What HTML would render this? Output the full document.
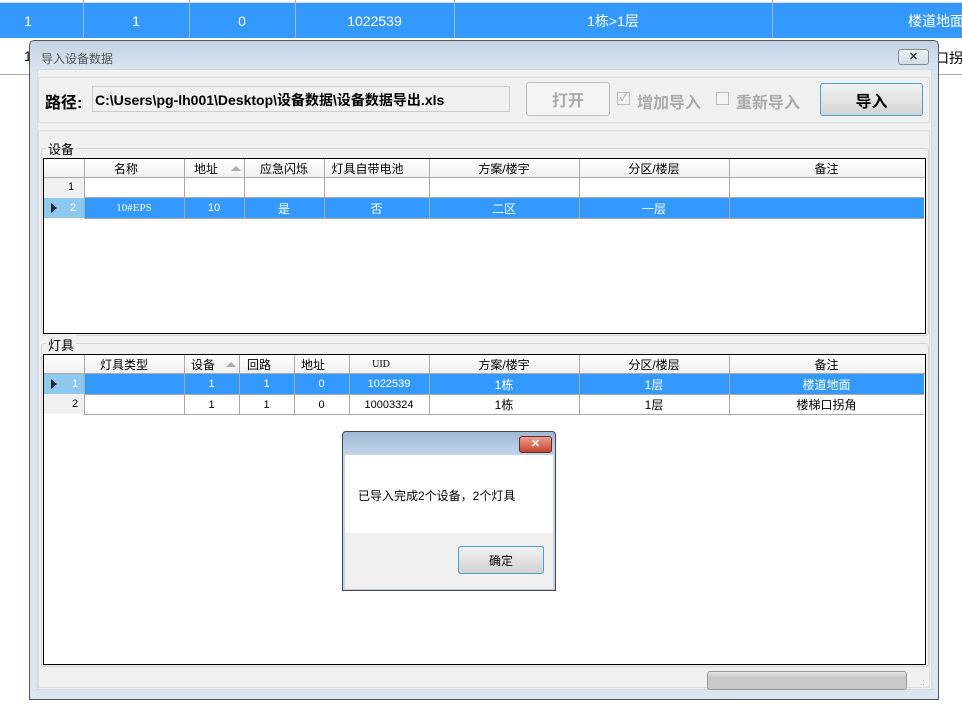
<!DOCTYPE html>
<html><head><meta charset="utf-8"><style>
*{margin:0;padding:0;box-sizing:border-box}
body{width:962px;height:718px;position:relative;background:#fff;overflow:hidden;font-family:"Liberation Sans","Noto Sans CJK SC",sans-serif;font-size:12px;color:#000}
.a{position:absolute}
.c{position:absolute;display:flex;align-items:center;justify-content:center;white-space:nowrap}
.bt{font-size:14px}
</style></head><body>
<!-- background table -->
<div class="a" style="left:0;top:3px;width:962px;height:35px;background:#3399ff"></div>
<div class="a" style="left:0;top:2px;width:962px;height:1px;background:#ddd"></div>
<div class="a" style="left:83px;top:0;width:1px;height:38px;background:#9bb"></div>
<div class="a" style="left:189px;top:0;width:1px;height:38px;background:#9bb"></div>
<div class="a" style="left:295px;top:0;width:1px;height:38px;background:#9bb"></div>
<div class="a" style="left:454px;top:0;width:1px;height:38px;background:#9bb"></div>
<div class="a" style="left:772px;top:0;width:1px;height:38px;background:#9bb"></div>
<div class="c bt" style="left:0;top:3px;width:56px;height:35px;color:#fff">1</div>
<div class="c bt" style="left:83px;top:3px;width:106px;height:35px;color:#fff">1</div>
<div class="c bt" style="left:189px;top:3px;width:106px;height:35px;color:#fff">0</div>
<div class="c bt" style="left:295px;top:3px;width:159px;height:35px;color:#fff">1022539</div>
<div class="c bt" style="left:454px;top:3px;width:318px;height:35px;color:#fff">1栋&gt;1层</div>
<div class="a bt" style="left:908px;top:11px;color:#fff;white-space:nowrap">楼道地面</div>
<div class="a bt" style="left:24px;top:48px">1</div>
<div class="a bt" style="left:935px;top:48px;white-space:nowrap">口拐</div>
<div class="a" style="left:0;top:74px;width:962px;height:1px;background:#aaa"></div>

<!-- dialog -->
<div class="a" style="left:29px;top:40px;width:910px;height:660px;border:1px solid #555;border-radius:5px 5px 0 0;background:linear-gradient(#c2d2e4,#dae5f1 30px,#dae5f1)"></div>
<div class="a" style="left:41px;top:50px;color:#555;font-size:12px">导入设备数据</div>
<div class="a" style="left:898px;top:49px;width:31px;height:16px;border:1px solid #888;border-radius:3px;background:linear-gradient(#eef2f7,#d3dbe6);text-align:center;font-size:11px;line-height:14px;font-weight:bold;color:#444">✕</div>
<div class="a" style="left:37px;top:69px;width:895px;height:621px;background:#f0f0f0;border:1px solid #cdd"></div>
<div class="a" style="left:38px;top:77px;width:892px;height:46px;border:1px solid #dcdcdc;border-radius:2px"></div>
<div class="a" style="left:45px;top:89px;font-size:16px;font-weight:bold">路径:</div>
<div class="a" style="left:92px;top:86px;width:418px;height:26px;border:1px solid #ccc;background:#f0f0f0;font-size:14px;font-weight:bold;padding:3px 0 0 2px;white-space:nowrap">C:\Users\pg-lh001\Desktop\设备数据\设备数据导出.xls</div>
<div class="c" style="left:526px;top:82px;width:84px;height:34px;border:1px solid #bbb;border-radius:3px;background:#f4f4f4;color:#aaa;font-size:16px;font-weight:bold">打开</div>
<div class="a" style="left:617px;top:92px;width:13px;height:13px;border:1px solid #bbb;color:#aaa;font-size:11px;line-height:11px;text-align:center">✓</div>
<div class="a" style="left:637px;top:89px;color:#aaa;font-size:16px;font-weight:bold">增加导入</div>
<div class="a" style="left:716px;top:92px;width:13px;height:13px;border:1px solid #bbb;background:#f4f4f4"></div>
<div class="a" style="left:736px;top:89px;color:#aaa;font-size:16px;font-weight:bold">重新导入</div>
<div class="c" style="left:820px;top:83px;width:103px;height:33px;border:1px solid #3ca4d8;border-radius:3px;background:linear-gradient(#f2f2f2,#e4e4e4 50%,#d2d2d2);font-size:16px;font-weight:bold">导入</div>

<div class="a" style="left:38px;top:130px;width:892px;height:558px;border:1px solid #dcdcdc"></div>
<!-- 设备 group -->
<div class="a" style="left:41px;top:148px;width:888px;height:188px;border:1px solid #d5d5d5;border-radius:3px"></div>
<div class="a" style="left:46px;top:139px;font-size:13px;background:#f0f0f0;padding:0 2px">设备</div>
<div class="a" style="left:43px;top:158px;width:883px;height:176px;border:1px solid #000;background:#fff"></div>
<div class="a" style="left:44px;top:159px;width:881px;height:19px;background:linear-gradient(#fff,#f0f0f0);border-bottom:1px solid #aaa"></div>
<div class="a" style="left:44px;top:178px;width:40px;height:40px;background:#f0f0f0"></div>
<div class="a" style="left:84px;top:198px;width:840px;height:20px;background:#3399ff"></div>
<div class="a" style="left:44px;top:198px;width:40px;height:20px;background:#8fc8ef"></div>
<div class="a" style="left:84px;top:197px;width:840px;height:1px;background:#aaa"></div>
<div class="a" style="left:84px;top:218px;width:840px;height:1px;background:#aaa"></div>
<div class="a" style="left:84px;top:159px;width:1px;height:59px;background:#aaa"></div>
<div class="a" style="left:184px;top:159px;width:1px;height:59px;background:#aaa"></div>
<div class="a" style="left:244px;top:159px;width:1px;height:59px;background:#aaa"></div>
<div class="a" style="left:324px;top:159px;width:1px;height:59px;background:#aaa"></div>
<div class="a" style="left:429px;top:159px;width:1px;height:59px;background:#aaa"></div>
<div class="a" style="left:579px;top:159px;width:1px;height:59px;background:#aaa"></div>
<div class="a" style="left:729px;top:159px;width:1px;height:59px;background:#aaa"></div>
<div class="c" style="left:84px;top:159px;width:84px;height:19px">名称</div>
<div class="c" style="left:184px;top:159px;width:44px;height:19px">地址</div>
<div class="a" style="left:231px;top:166px;border:5px solid transparent;border-bottom:5px solid #aaa;border-top:0"></div>
<div class="c" style="left:244px;top:159px;width:80px;height:19px">应急闪烁</div>
<div class="c" style="left:324px;top:159px;width:87px;height:19px">灯具自带电池</div>
<div class="c" style="left:429px;top:159px;width:150px;height:19px">方案/楼宇</div>
<div class="c" style="left:579px;top:159px;width:150px;height:19px">分区/楼层</div>
<div class="c" style="left:729px;top:159px;width:195px;height:19px">备注</div>
<div class="a" style="left:68px;top:181px;font-size:11px">1</div>
<div class="a" style="left:51px;top:203px;border-left:6px solid #222;border-top:5px solid transparent;border-bottom:5px solid transparent"></div>
<div class="a" style="left:70px;top:202px;font-size:11px;color:#fff">2</div>
<div class="c" style="left:84px;top:198px;width:100px;height:20px;color:#fff;font-family:'Liberation Serif',serif;font-size:11px">10#EPS</div>
<div class="c" style="left:184px;top:198px;width:60px;height:20px;color:#fff;font-size:11px">10</div>
<div class="c" style="left:244px;top:198px;width:80px;height:20px;color:#fff">是</div>
<div class="c" style="left:324px;top:198px;width:105px;height:20px;color:#fff">否</div>
<div class="c" style="left:429px;top:198px;width:150px;height:20px;color:#fff">二区</div>
<div class="c" style="left:579px;top:198px;width:150px;height:20px;color:#fff">一层</div>

<!-- 灯具 group -->
<div class="a" style="left:41px;top:343px;width:888px;height:324px;border:1px solid #d5d5d5;border-radius:3px"></div>
<div class="a" style="left:46px;top:335px;font-size:13px;background:#f0f0f0;padding:0 2px">灯具</div>
<div class="a" style="left:43px;top:354px;width:883px;height:311px;border:1px solid #000;background:#fff"></div>
<div class="a" style="left:44px;top:355px;width:881px;height:19px;background:linear-gradient(#fff,#f0f0f0);border-bottom:1px solid #aaa"></div>
<div class="a" style="left:44px;top:374px;width:40px;height:40px;background:#f0f0f0"></div>
<div class="a" style="left:84px;top:374px;width:840px;height:20px;background:#3399ff"></div>
<div class="a" style="left:44px;top:374px;width:40px;height:20px;background:#8fc8ef"></div>
<div class="a" style="left:84px;top:394px;width:840px;height:1px;background:#aaa"></div>
<div class="a" style="left:84px;top:414px;width:840px;height:1px;background:#aaa"></div>
<div class="a" style="left:84px;top:355px;width:1px;height:59px;background:#aaa"></div>
<div class="a" style="left:184px;top:355px;width:1px;height:59px;background:#aaa"></div>
<div class="a" style="left:239px;top:355px;width:1px;height:59px;background:#aaa"></div>
<div class="a" style="left:294px;top:355px;width:1px;height:59px;background:#aaa"></div>
<div class="a" style="left:349px;top:355px;width:1px;height:59px;background:#aaa"></div>
<div class="a" style="left:429px;top:355px;width:1px;height:59px;background:#aaa"></div>
<div class="a" style="left:579px;top:355px;width:1px;height:59px;background:#aaa"></div>
<div class="a" style="left:729px;top:355px;width:1px;height:59px;background:#aaa"></div>
<div class="c" style="left:84px;top:355px;width:80px;height:19px">灯具类型</div>
<div class="c" style="left:184px;top:355px;width:38px;height:19px">设备</div>
<div class="a" style="left:226px;top:362px;border:5px solid transparent;border-bottom:5px solid #aaa;border-top:0"></div>
<div class="c" style="left:239px;top:355px;width:40px;height:19px">回路</div>
<div class="c" style="left:294px;top:355px;width:38px;height:19px">地址</div>
<div class="c" style="left:349px;top:355px;width:64px;height:19px;font-size:10px;font-family:'Liberation Serif',serif">UID</div>
<div class="c" style="left:429px;top:355px;width:150px;height:19px">方案/楼宇</div>
<div class="c" style="left:579px;top:355px;width:150px;height:19px">分区/楼层</div>
<div class="c" style="left:729px;top:355px;width:195px;height:19px">备注</div>
<div class="a" style="left:51px;top:379px;border-left:6px solid #222;border-top:5px solid transparent;border-bottom:5px solid transparent"></div>
<div class="a" style="left:72px;top:378px;font-size:11px;color:#fff">1</div>
<div class="a" style="left:72px;top:398px;font-size:11px">2</div>
<div class="c" style="left:184px;top:374px;width:55px;height:20px;color:#fff;font-size:11px">1</div>
<div class="c" style="left:239px;top:374px;width:55px;height:20px;color:#fff;font-size:11px">1</div>
<div class="c" style="left:294px;top:374px;width:55px;height:20px;color:#fff;font-size:11px">0</div>
<div class="c" style="left:349px;top:374px;width:80px;height:20px;color:#fff;font-size:11px">1022539</div>
<div class="c" style="left:429px;top:374px;width:150px;height:20px;color:#fff">1栋</div>
<div class="c" style="left:579px;top:374px;width:150px;height:20px;color:#fff">1层</div>
<div class="c" style="left:729px;top:374px;width:195px;height:20px;color:#fff">楼道地面</div>
<div class="c" style="left:184px;top:395px;width:55px;height:19px;font-size:11px">1</div>
<div class="c" style="left:239px;top:395px;width:55px;height:19px;font-size:11px">1</div>
<div class="c" style="left:294px;top:395px;width:55px;height:19px;font-size:11px">0</div>
<div class="c" style="left:349px;top:395px;width:80px;height:19px;font-size:11px">10003324</div>
<div class="c" style="left:429px;top:395px;width:150px;height:19px">1栋</div>
<div class="c" style="left:579px;top:395px;width:150px;height:19px">1层</div>
<div class="c" style="left:729px;top:395px;width:195px;height:19px">楼梯口拐角</div>

<!-- status bar -->
<div class="a" style="left:707px;top:671px;width:200px;height:19px;border:1px solid #999;border-radius:3px;background:linear-gradient(#e6e6e6,#c8c8c8 30%,#c8c8c8)"></div>
<div class="a" style="left:920px;top:678px;font-size:8px;color:#999">.:</div>

<!-- message box -->
<div class="a" style="left:342px;top:431px;width:214px;height:160px;border:1px solid #444;border-radius:4px 4px 0 0;background:linear-gradient(#9fb8d4,#c0d4ea 22px)"></div>
<div class="a" style="left:519px;top:436px;width:33px;height:17px;border:1px solid #6a2a2a;border-radius:3px;background:linear-gradient(#e8a08e,#c8442e);color:#fff;font-weight:bold;font-size:11px;text-align:center;line-height:15px">✕</div>
<div class="a" style="left:345px;top:455px;width:208px;height:78px;background:#fff"></div>
<div class="a" style="left:345px;top:533px;width:208px;height:56px;background:#f0f0f0"></div>
<div class="a" style="left:358px;top:487px;font-size:12px;white-space:nowrap">已导入完成2个设备，2个灯具</div>
<div class="c" style="left:458px;top:546px;width:86px;height:28px;border:1px solid #3ca4d8;border-radius:3px;background:linear-gradient(#f2f2f2,#e2e2e2 50%,#d0d0d0)">确定</div>
</body></html>
